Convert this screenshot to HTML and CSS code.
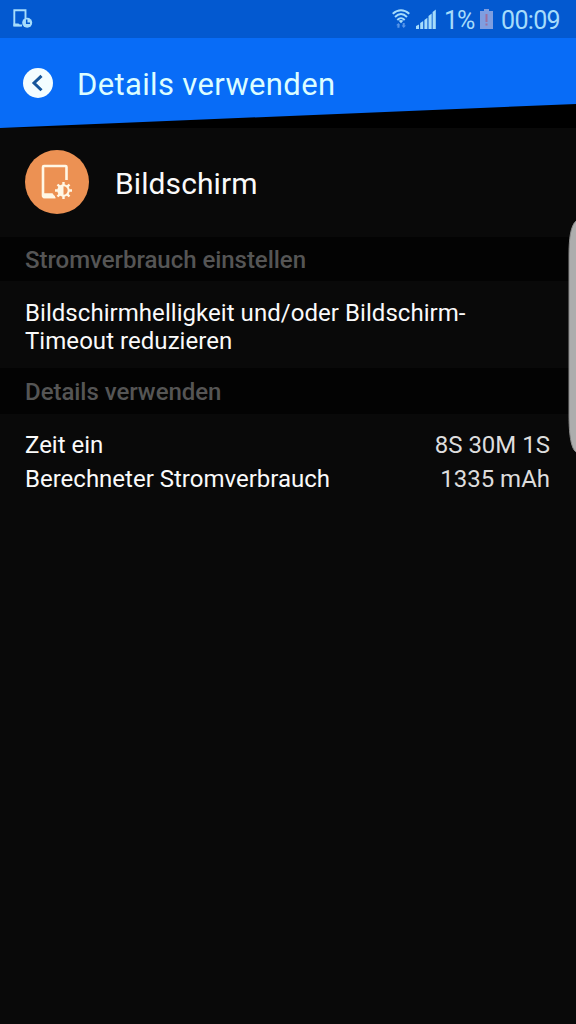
FILE: index.html
```html
<!DOCTYPE html>
<html lang="de">
<head>
<meta charset="utf-8">
<title>Details verwenden</title>
<link rel="stylesheet" href="styles.css">
</head>
<body>
<div class="screen">
  <div class="statusbar">
    <svg class="status-device" width="21" height="22" viewBox="0 0 21 22">
      <path d="M10 17.500H2.300V2.200h11.200v8.500" fill="none" stroke="currentColor" stroke-width="1.900"/>
      <path d="M1.500 15.600h5l2.500 2.700H1.500z" fill="currentColor"/>
      <circle cx="15.200" cy="14.800" r="5" fill="currentColor"/>
      <path d="M14.700 11.500v3.700h3.300" fill="none" stroke="#0359d0" stroke-width="1.500"/>
    </svg>
    <div class="status-right">
      <svg class="wifi" width="18" height="20" viewBox="0 0 18 20">
        <g fill="none" stroke="currentColor" stroke-width="1.900">
          <path d="M.7 4.700Q9-2.300 17.300 4.700"/>
          <path d="M3 8Q9 2.200 15 8"/>
          <path d="M5.300 11Q9 7.200 12.700 11"/>
        </g>
        <path d="M6.700 11.800Q9 10.200 11.300 11.800L9 14.200z" fill="currentColor"/>
        <path d="M6.500 14L8.300 16.200H7.500V18.800H5.400V16.200H4.100zM11.700 19L9.600 16.600h1.100V14h2v2.600h1.300z" fill="#5795e8"/>
      </svg>
      <svg class="signal" width="20" height="21" viewBox="0 0 20 21">
        <path d="M0 20v-3l3-1.500V20zM4.200 20v-6l3-2v8zM8.400 20v-9l3-2.300V20zM12.500 20V7l3.200-2.500V20zM16.600 20V3l3.200-2.500V20z" fill="currentColor"/>
      </svg>
      <span class="percent">1%</span>
      <svg class="battery" width="13" height="20" viewBox="0 0 13 20">
        <path d="M4 0h5v2h4v18H0V2h4z" fill="#7f9ee0"/>
        <path d="M5.500 5h2v8h-2zM5.500 14.500h2v2h-2z" fill="#9d6f9d"/>
      </svg>
      <span class="clock">00:09</span>
    </div>
  </div>
  <header class="header">
    <svg class="back" width="30" height="30" viewBox="0 0 30 30">
      <circle cx="15" cy="15" r="15" fill="#f3fdff"/>
      <path d="M18.500 7.800L11 15l7.500 7.300" fill="none" stroke="#16569b" stroke-width="3"/>
    </svg>
    <h1 class="title">Details verwenden</h1>
  </header>
  <main>
    <div class="app">
      <svg width="64" height="64" viewBox="0 0 64 64">
        <circle cx="32" cy="32" r="32" fill="#ec9153"/>
        <path d="M30 47H19.500a1.500 1.500 0 0 1-1.500-1.500V17a1 1 0 0 1 1-1h21.500a1 1 0 0 1 1 1v13" fill="none" stroke="#fff7e5" stroke-width="2.600"/>
        <path d="M18 43.200h9.500l3.500 5H18z" fill="#fff7e5"/>
        <circle cx="38.500" cy="40.500" r="5.200" fill="none" stroke="#fff7e5" stroke-width="2"/>
        <path d="M38.500 35v11a5.500 5.500 0 0 1 0-11z" fill="#fff7e5"/>
        <path d="M38.500 32v3M38.500 46v3M30 40.500h3M44 40.500h3M32.500 34.500l2.200 2.200M42.300 44.300l2.200 2.200M32.500 46.500l2.200-2.200M42.300 36.700l2.200-2.200" stroke="#fff7e5" stroke-width="2.400"/>
      </svg>
      <span class="app-name">Bildschirm</span>
    </div>
    <h2 class="section">Stromverbrauch einstellen</h2>
    <p class="tip">Bildschirmhelligkeit und/oder Bildschirm-<br>Timeout reduzieren</p>
    <h2 class="section details-section">Details verwenden</h2>
    <div class="rows">
      <div class="row"><span>Zeit ein</span><span class="value">8S 30M 1S</span></div>
      <div class="row"><span>Berechneter Stromverbrauch</span><span class="value">1335 mAh</span></div>
    </div>
  </main>
  <svg class="edge-handle" width="8" height="234" viewBox="0 0 8 234">
    <path d="M8 0C2.500 5 1 18 1 34V194C1 211 2.500 227 8 231z" fill="#adadad"/>
    <path d="M8 0C2.500 5 1 18 1 34V194C1 211 2.500 227 8 231" fill="none" stroke="#8b8b8b"/>
  </svg>
</div>
</body>
</html>
```
FILE: styles.css
```css
body {
  margin: 0;
  background: #090909;
  font-family: Roboto, sans-serif;
}
.screen {
  position: relative;
  width: 576px;
  height: 1024px;
  overflow: hidden;
  background: linear-gradient(#000 128px, #090909 128px);
  color: #fafafa;
}
.statusbar {
  height: 38px;
  box-sizing: border-box;
  padding: 0 16px 0 12px;
  display: flex;
  justify-content: space-between;
  align-items: center;
  background: #0359d0;
  color: #a6dcfb;
  font-size: 25px;
  line-height: 38px;
}
.status-right {
  display: flex;
  align-items: center;
}
.wifi { margin-right: 6px; }
.signal { margin-right: 8px; }
.percent { width: 36px; letter-spacing: -1px; padding-top: 3px; }
.battery { margin-right: 8px; }
.clock { width: 59px; letter-spacing: -.65px; white-space: nowrap; padding-top: 3px; }
.header {
  height: 90px;
  box-sizing: border-box;
  padding: 0 23px;
  display: flex;
  background: #086cf7;
  clip-path: polygon(0 0, 100% 0, 100% 66px, 0 90px);
}
.back { margin-top: 30px; }
.title {
  margin: 27px 0 0 24px;
  font-size: 31px;
  line-height: 40px;
  font-weight: 400;
  letter-spacing: .35px;
  color: #dcfdff;
}
.app {
  height: 109px;
  box-sizing: border-box;
  padding: 22px 0 0 25px;
  display: flex;
  gap: 26px;
}
.app-name {
  font-size: 30px;
  line-height: 67px;
  letter-spacing: .1px;
}
.section {
  margin: 0;
  height: 44px;
  padding-left: 25px;
  background: #030303;
  color: #555;
  font-size: 24px;
  line-height: 47px;
  font-weight: 500;
  letter-spacing: -.04px;
}
.details-section {
  height: 46px;
  line-height: 49px;
}
.tip {
  margin: 0;
  height: 69px;
  box-sizing: border-box;
  padding: 18px 25px 0;
  font-size: 24px;
  line-height: 28px;
  letter-spacing: .05px;
}
.tip + .section { margin-top: 18px; }
.rows { padding: 14px 26px 0 25px; }
.row {
  display: flex;
  justify-content: space-between;
  font-size: 24px;
  line-height: 34px;
}
.value { color: #ddd; }
.edge-handle {
  position: absolute;
  right: 0;
  top: 221px;
}
```
